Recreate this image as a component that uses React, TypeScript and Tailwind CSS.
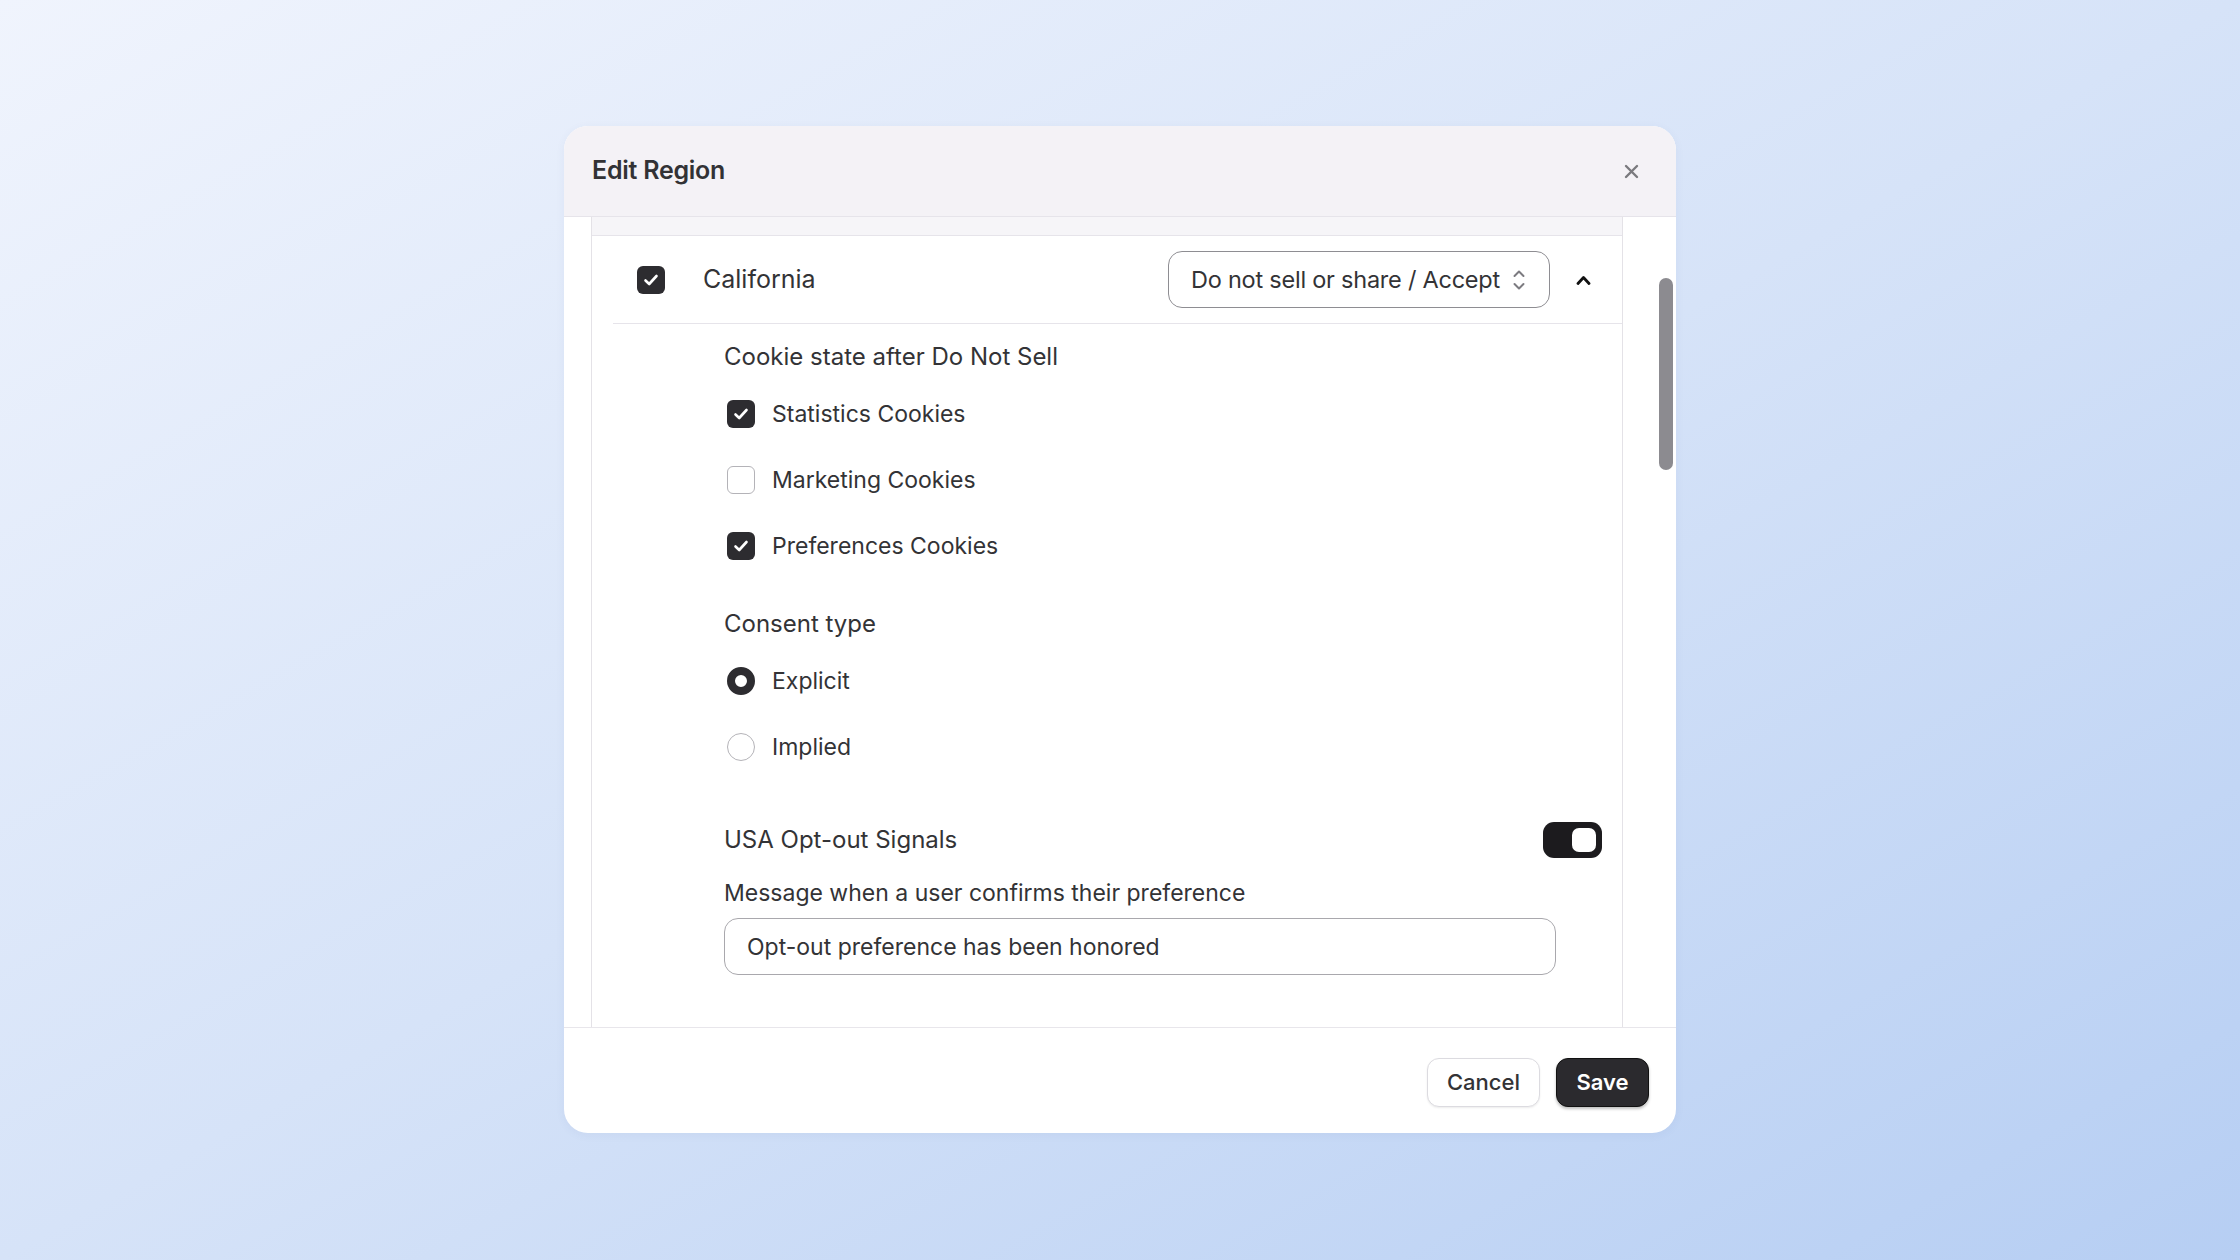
import { useState } from 'react'

const FONT = { fontFamily: 'Inter, "Noto Sans", "Liberation Sans", sans-serif' }

const COOKIE_ITEMS = [
  { value: 'statistics', label: 'Statistics Cookies' },
  { value: 'marketing', label: 'Marketing Cookies' },
  { value: 'preferences', label: 'Preferences Cookies' },
]

const CONSENT_OPTIONS = [
  { value: 'explicit', label: 'Explicit' },
  { value: 'implied', label: 'Implied' },
]

export default function App() {
  const [enabled, setEnabled] = useState(true)
  const [cookies, setCookies] = useState<string[]>(['statistics', 'preferences'])
  const [consent, setConsent] = useState('explicit')
  const [signals, setSignals] = useState(true)
  const [message, setMessage] = useState('Opt-out preference has been honored')

  const toggleCookie = (value: string) =>
    setCookies((prev) => (prev.includes(value) ? prev.filter((v) => v !== value) : [...prev, value]))

  return (
    <div
      className="flex h-[1260px] w-full justify-center bg-gradient-to-br from-[#f0f4fd] via-[#d6e3f8] to-[#b6cef3] pt-[126px] text-[#333336]"
      style={FONT}
    >
      <div className="flex h-[1007px] w-[1112px] flex-col overflow-hidden rounded-[24px] bg-white shadow-[0_2px_10px_rgba(60,80,130,0.06)]">
        {/* header */}
        <div className="flex h-[91px] shrink-0 items-center justify-between border-b border-[#e6e4ea] bg-[#f4f2f6] pl-[28px] pr-[37px]">
          <h2 className="text-[25px] font-semibold tracking-[-0.01em] text-[#323235]">Edit Region</h2>
          <button className="text-[#7a7a7e]">
            <svg width="15" height="15" viewBox="0 0 15 15" fill="none" stroke="currentColor" strokeWidth="2.4" strokeLinecap="round">
              <path d="M2 2 13 13M13 2 2 13" />
            </svg>
          </button>
        </div>

        {/* body */}
        <div className="flex min-h-0 flex-1 overflow-hidden pl-[27px]">
          <div className="flex w-[1032px] shrink-0 flex-col border-x border-[#e4e2e7]">
            <div className="h-[19px] shrink-0 border-b border-[#e6e4ea] bg-[#f6f5f8]" />

            <div className="flex h-[87px] shrink-0 items-center pl-[45px] pr-[31px]">
              <Checkbox checked={enabled} onChange={() => setEnabled(!enabled)} />
              <span className="ml-[38px] flex-1 text-[25px]">California</span>
              <button className="flex h-[57px] w-[382px] items-center justify-between whitespace-nowrap rounded-[14px] border-[1.5px] border-[#8e8d92] pl-[22px] pr-[23px] text-[23.5px] tracking-[-0.01em] text-[#333336]">
                <span>Do not sell or share / Accept</span>
                <svg width="14" height="24" viewBox="0 0 14 24" fill="none" stroke="#7c7b80" strokeWidth="2" strokeLinecap="round" strokeLinejoin="round">
                  <path d="M2.5 8 7 3.5 11.5 8M2.5 16 7 20.5 11.5 16" />
                </svg>
              </button>
              <svg className="ml-[26px]" width="15" height="10" viewBox="0 0 15 10" fill="none" stroke="#111" strokeWidth="2.8" strokeLinecap="round" strokeLinejoin="round">
                <path d="M2 8.5 7.5 2.5 13 8.5" />
              </svg>
            </div>

            <div className="ml-[21px] h-px shrink-0 bg-[#e6e4ea]" />

            <div className="flex flex-col pl-[132px] pr-[20px] pt-[18px] text-[24px]">
              <div className="flex h-[30px] items-center">Cookie state after Do Not Sell</div>
              <div className="mt-[9px] flex flex-col">
                {COOKIE_ITEMS.map((item) => (
                  <label key={item.value} className="flex h-[66px] items-center gap-[17px] pl-[3px]">
                    <Checkbox checked={cookies.includes(item.value)} onChange={() => toggleCookie(item.value)} />
                    <span className="text-[23px]">{item.label}</span>
                  </label>
                ))}
              </div>

              <div className="mt-[30px] flex h-[30px] items-center">Consent type</div>
              <div className="mt-[9px] flex flex-col">
                {CONSENT_OPTIONS.map((opt) => (
                  <label key={opt.value} className="flex h-[66px] items-center gap-[17px] pl-[3px]">
                    <Radio checked={consent === opt.value} onChange={() => setConsent(opt.value)} />
                    <span className="text-[23px]">{opt.label}</span>
                  </label>
                ))}
              </div>

              <div className="mt-[42px] flex h-[36px] items-center justify-between">
                <span>USA Opt-out Signals</span>
                <Toggle on={signals} onChange={() => setSignals(!signals)} />
              </div>

              <div className="mt-[20px] flex h-[30px] items-center text-[23px]">Message when a user confirms their preference</div>
              <input
                value={message}
                onChange={(e) => setMessage(e.target.value)}
                className="mt-[10px] h-[57px] w-[832px] rounded-[14px] border-[1.5px] border-[#a9a8ad] px-[22px] text-[23px] text-[#333336] outline-none"
              />
            </div>
          </div>

          {/* scrollbar */}
          <div className="flex-1 pl-[36px] pt-[61px]">
            <div className="h-[192px] w-[14px] rounded-full bg-[#8c8b90]" />
          </div>
        </div>

        {/* footer */}
        <div className="flex h-[106px] shrink-0 items-center justify-end gap-[16px] border-t border-[#e8e6eb] pr-[27px] pt-[3px]">
          <button className="h-[49px] w-[113px] rounded-[12px] border border-[#dcdbe0] bg-white text-[22px] font-medium text-[#333336] shadow-[0_1px_2px_rgba(0,0,0,0.08)]">
            Cancel
          </button>
          <button className="h-[49px] w-[93px] rounded-[12px] border border-[#111] bg-[#2b2a2e] text-[22px] font-semibold text-white shadow-[0_2px_3px_rgba(0,0,0,0.25)]">
            Save
          </button>
        </div>
      </div>
    </div>
  )
}

function Checkbox({ checked, onChange }: { checked: boolean; onChange: () => void }) {
  return (
    <button
      type="button"
      onClick={onChange}
      className={
        checked
          ? 'flex h-[28px] w-[28px] shrink-0 items-center justify-center rounded-[6px] bg-[#2d2c30]'
          : 'flex h-[28px] w-[28px] shrink-0 items-center justify-center rounded-[6px] border-[1.5px] border-[#b4b3b8] bg-white'
      }
    >
      {checked && (
        <svg width="16" height="16" viewBox="0 0 16 16" fill="none" stroke="white" strokeWidth="2.6" strokeLinecap="round" strokeLinejoin="round">
          <path d="M2.5 8.5 6.2 12 13.5 4" />
        </svg>
      )}
    </button>
  )
}

function Radio({ checked, onChange }: { checked: boolean; onChange: () => void }) {
  return (
    <button
      type="button"
      onClick={onChange}
      className={
        checked
          ? 'h-[28px] w-[28px] shrink-0 rounded-full border-[8px] border-[#2d2c30] bg-white'
          : 'h-[28px] w-[28px] shrink-0 rounded-full border-[1.5px] border-[#b4b3b8] bg-white'
      }
    />
  )
}

function Toggle({ on, onChange }: { on: boolean; onChange: () => void }) {
  return (
    <button
      type="button"
      onClick={onChange}
      className={
        on
          ? 'flex h-[36px] w-[59px] items-center justify-end rounded-[11px] bg-[#1c1b1e] px-[6px]'
          : 'flex h-[36px] w-[59px] items-center justify-start rounded-[11px] bg-[#c8c7cc] px-[6px]'
      }
    >
      <span className="h-[24px] w-[24px] rounded-[7px] bg-white" />
    </button>
  )
}
